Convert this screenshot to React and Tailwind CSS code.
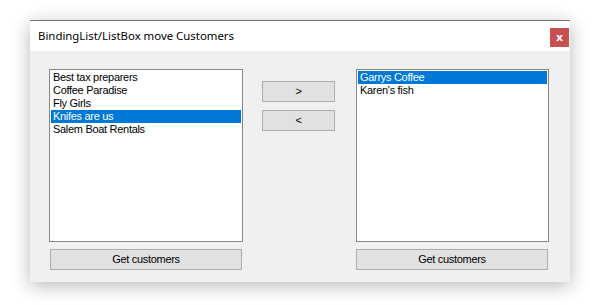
import React from 'react'

const leftItems = ['Best tax preparers', 'Coffee Paradise', 'Fly Girls', 'Knifes are us', 'Salem Boat Rentals']
const rightItems = ['Garrys Coffee', "Karen's fish"]

const ListBox = ({ items, selected, width }) => (
  <div className={`h-[173px] border border-[#828790] bg-white px-px pt-px ${width}`}>
    {items.map((item, i) => (
      <div
        key={item}
        className={`h-[13px] pl-[2px] text-[11px] leading-[13px] tracking-[-0.3px] whitespace-nowrap ${
          i === selected ? 'bg-[#0078d7] text-white' : 'text-black'
        }`}
      >
        {item}
      </div>
    ))}
  </div>
)

const WinButton = ({ children, className = '' }) => (
  <button className={`h-[21px] border border-[#adadad] bg-[#e1e1e1] text-[11px] leading-[19px] tracking-[-0.3px] text-black ${className}`}>
    {children}
  </button>
)

export default function App() {
  return (
    <div className="h-[305px] w-[598px] bg-white pl-[30px] pt-[20px]" style={{ fontFamily: '"Liberation Sans", Arial, sans-serif' }}>
      <div className="flex h-[262px] w-[540px] flex-col border-t border-[#777777] shadow-[0_4px_18px_rgba(0,0,0,0.28)]">
        <div className="flex h-[30px] items-start justify-between bg-white">
          <span className="pl-[8px] pt-[7px] text-[11.4px] leading-[16px] text-black" style={{ fontFamily: '"Noto Sans", "Open Sans", sans-serif' }}>
            BindingList/ListBox move Customers
          </span>
          <div className="mr-px mt-[7px] flex h-[19px] w-[19px] items-center justify-center bg-[#c75050] text-[11px] font-bold leading-none text-white" style={{ fontFamily: '"DejaVu Sans", sans-serif' }}>
            x
          </div>
        </div>
        <div className="flex flex-1 bg-[#f0f0f0] pl-[19px] pt-[18px]">
          <div className="flex w-[194px] flex-col">
            <ListBox items={leftItems} selected={3} width="w-[194px]" />
            <WinButton className="ml-px mt-[7px] w-[192px]">Get customers</WinButton>
          </div>
          <div className="ml-[19px] flex w-[73px] flex-col gap-[8px] pt-[12px]">
            <WinButton className="w-[73px]">&gt;</WinButton>
            <WinButton className="w-[73px]">&lt;</WinButton>
          </div>
          <div className="ml-[21px] flex w-[193px] flex-col">
            <ListBox items={rightItems} selected={0} width="w-[193px]" />
            <WinButton className="mt-[7px] w-[192px]">Get customers</WinButton>
          </div>
        </div>
      </div>
    </div>
  )
}
